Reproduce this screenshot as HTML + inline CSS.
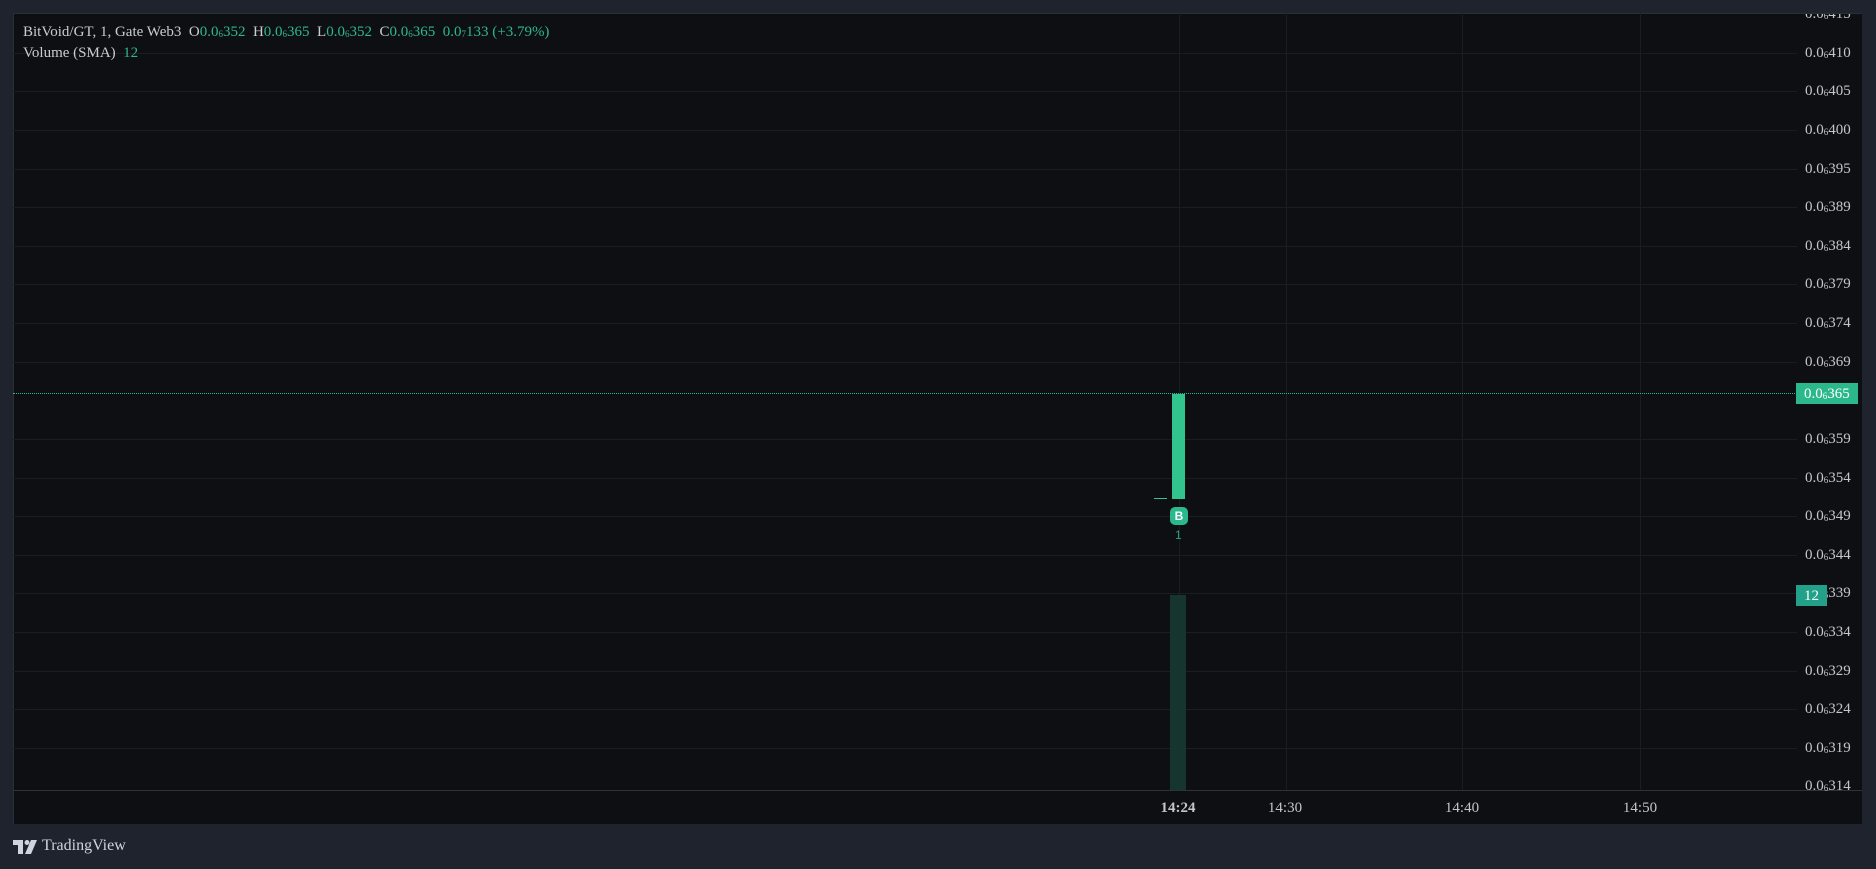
<!DOCTYPE html>
<html><head><meta charset="utf-8"><style>
*{margin:0;padding:0;box-sizing:border-box}
body{width:1876px;height:869px;background:#1f232e;position:relative;overflow:hidden;font-family:"Liberation Serif",serif;color:#c9ccd3}
#panel{position:absolute;left:13px;top:13px;width:1849px;height:811px;background:#0e0f12;border-top:1px solid #2a2e39;border-left:1px solid #2a2e39}
.h{position:absolute;left:13px;width:1784px;height:1px;background:#1a1d23}
.v{position:absolute;top:13px;width:1px;height:777px;background:#1a1d23}
.pl{position:absolute;left:1805px;font-size:15px;line-height:15px;color:#c3c6cd}
sub{font-size:9px;vertical-align:-1px}
.g{color:#2db88b}
.t{position:absolute;top:800px;font-size:15px;color:#c3c6cd;transform:translateX(-50%)}
</style></head><body>
<div id="panel"></div>
<div class="h" style="top:53px"></div><div class="h" style="top:91px"></div><div class="h" style="top:130px"></div><div class="h" style="top:169px"></div><div class="h" style="top:207px"></div><div class="h" style="top:246px"></div><div class="h" style="top:284px"></div><div class="h" style="top:323px"></div><div class="h" style="top:362px"></div><div class="h" style="top:439px"></div><div class="h" style="top:478px"></div><div class="h" style="top:516px"></div><div class="h" style="top:555px"></div><div class="h" style="top:593px"></div><div class="h" style="top:632px"></div><div class="h" style="top:671px"></div><div class="h" style="top:709px"></div><div class="h" style="top:748px"></div>
<div class="v" style="left:1179px"></div><div class="v" style="left:1286px"></div><div class="v" style="left:1462px"></div><div class="v" style="left:1640px"></div>
<div style="position:absolute;left:13px;top:790px;width:1849px;height:1px;background:#2f323a"></div>
<div style="position:absolute;left:13px;top:393px;width:1784px;border-top:1px dotted #2db88b"></div>
<div style="position:absolute;left:1172px;top:394px;width:13px;height:105px;background:#31c48d"></div>
<div style="position:absolute;left:1154px;top:498px;width:13px;height:1px;background:#31c48d"></div>
<div style="position:absolute;left:1170px;top:507px;width:18px;height:18px;border-radius:5px;background:#2bb88a;color:#fff;font:bold 12px 'Liberation Sans',sans-serif;text-align:center;line-height:18px">B</div>
<div style="position:absolute;left:1175px;top:528px;font:12px 'Liberation Sans',sans-serif;color:#2aa07a">1</div>
<div style="position:absolute;left:1170px;top:595px;width:16px;height:195px;background:#16352e"></div>
<div style="position:absolute;left:23px;top:24px;font-size:15px;white-space:nowrap">BitVoid/GT, 1, Gate Web3&nbsp; O<span class="g">0.0<sub>6</sub>352</span>&nbsp; H<span class="g">0.0<sub>6</sub>365</span>&nbsp; L<span class="g">0.0<sub>6</sub>352</span>&nbsp; C<span class="g">0.0<sub>6</sub>365</span>&nbsp; <span class="g">0.0<sub>7</sub>133 (+3.79%)</span></div>
<div style="position:absolute;left:23px;top:45px;font-size:15px">Volume (SMA)&nbsp; <span class="g">12</span></div>
<div class="pl" style="top:7px;clip-path:inset(7px 0 0 0)">0.0<sub>6</sub>415</div>
<div class="pl" style="top:46px">0.0<sub>6</sub>410</div><div class="pl" style="top:84px">0.0<sub>6</sub>405</div><div class="pl" style="top:123px">0.0<sub>6</sub>400</div><div class="pl" style="top:162px">0.0<sub>6</sub>395</div><div class="pl" style="top:200px">0.0<sub>6</sub>389</div><div class="pl" style="top:239px">0.0<sub>6</sub>384</div><div class="pl" style="top:277px">0.0<sub>6</sub>379</div><div class="pl" style="top:316px">0.0<sub>6</sub>374</div><div class="pl" style="top:355px">0.0<sub>6</sub>369</div><div class="pl" style="top:432px">0.0<sub>6</sub>359</div><div class="pl" style="top:471px">0.0<sub>6</sub>354</div><div class="pl" style="top:509px">0.0<sub>6</sub>349</div><div class="pl" style="top:548px">0.0<sub>6</sub>344</div><div class="pl" style="top:586px">0.0<sub>6</sub>339</div><div class="pl" style="top:625px">0.0<sub>6</sub>334</div><div class="pl" style="top:664px">0.0<sub>6</sub>329</div><div class="pl" style="top:702px">0.0<sub>6</sub>324</div><div class="pl" style="top:741px">0.0<sub>6</sub>319</div><div class="pl" style="top:779px;clip-path:inset(0 0 4px 0)">0.0<sub>6</sub>314</div>
<div style="position:absolute;left:1796px;top:383px;width:62px;height:21px;background:#2bb88a;color:#fff;font-size:15px;line-height:22px;padding-left:8px">0.0<sub>6</sub>365</div>
<div style="position:absolute;left:1796px;top:585px;width:31px;height:21px;background:#22a08a;color:#fff;font-size:15px;line-height:22px;text-align:center">12</div>
<div class="t" style="left:1178px;font-weight:bold">14:24</div>
<div class="t" style="left:1285px">14:30</div>
<div class="t" style="left:1462px">14:40</div>
<div class="t" style="left:1640px">14:50</div>
<svg style="position:absolute;left:13px;top:840px" width="24" height="14" viewBox="0 0 24 14"><path d="M0 0H10V14H5V5H0Z" fill="#d1d4dc"/><circle cx="14" cy="2.5" r="2.5" fill="#d1d4dc"/><path d="M18 0H24L18 14H12Z" fill="#d1d4dc"/></svg>
<div style="position:absolute;left:42px;top:837px;font-size:16px;color:#d1d4dc">TradingView</div>
</body></html>
